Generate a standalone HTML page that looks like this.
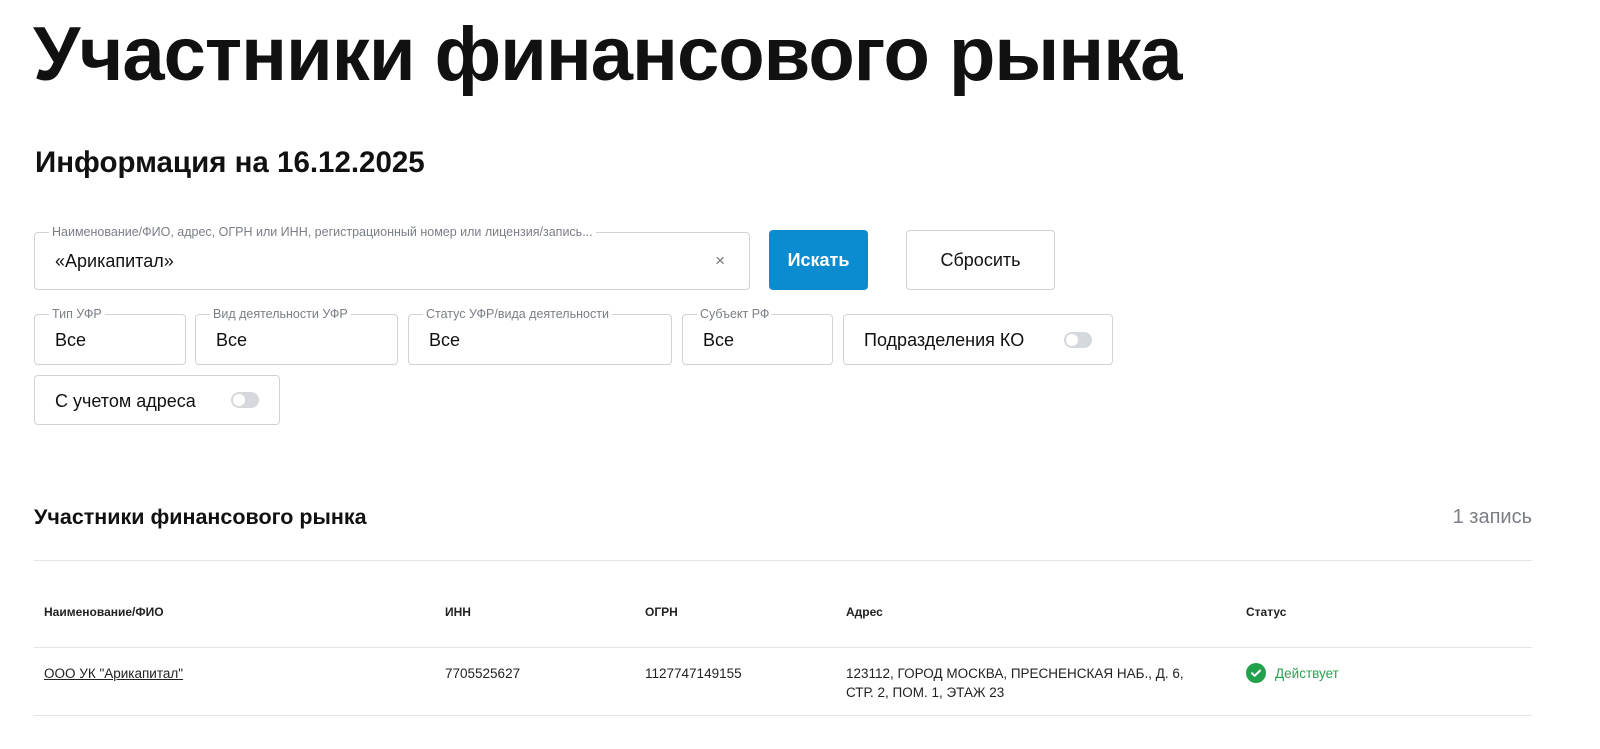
<!DOCTYPE html>
<html><head><meta charset="utf-8"><style>
*{box-sizing:border-box;margin:0;padding:0}
body{width:1600px;height:749px;background:#fff;font-family:"Liberation Sans",sans-serif;color:#111;position:relative;overflow:hidden}
.a{position:absolute}
h1{position:absolute;left:33px;top:11px;font-size:76px;font-weight:bold;letter-spacing:-1px;white-space:nowrap;color:#111}
h2{position:absolute;left:35px;top:146px;font-size:29.5px;font-weight:bold;white-space:nowrap}
.box{position:absolute;border:1px solid #cfd3d8;border-radius:4px;background:#fff}
.lbl{position:absolute;top:-8px;left:14px;background:#fff;padding:0 3px;font-size:12.5px;color:#7a7f86;white-space:nowrap}
.val{position:absolute;left:20px;font-size:18px;color:#111;white-space:nowrap}
.tg{position:absolute;width:28px;height:16px;border-radius:8px;background:#d5d8dc}
.tg:after{content:"";position:absolute;left:2px;top:2px;width:12px;height:12px;border-radius:50%;background:#fff}
.th{position:absolute;top:605px;font-size:12px;font-weight:bold;color:#222}
.td{position:absolute;top:664px;font-size:13.5px;color:#222;line-height:19px}
.ln{position:absolute;left:34px;width:1498px;height:1px;background:#e3e5e8}
</style></head><body>
<h1>Участники финансового рынка</h1>
<h2>Информация на 16.12.2025</h2>

<div class="box" style="left:34px;top:232px;width:716px;height:58px"><span class="lbl">Наименование/ФИО, адрес, ОГРН или ИНН, регистрационный номер или лицензия/запись...</span><span class="val" style="top:18px">«Арикапитал»</span><span class="a" style="right:24px;top:18px;font-size:17px;color:#777">×</span></div>
<div class="a" style="left:769px;top:230px;width:99px;height:60px;background:#0b8bd0;border-radius:4px;color:#fff;font-weight:bold;font-size:18px;text-align:center;line-height:60px">Искать</div>
<div class="box" style="left:906px;top:230px;width:149px;height:60px;text-align:center;line-height:58px;font-size:18px">Сбросить</div>

<div class="box" style="left:34px;top:314px;width:152px;height:51px"><span class="lbl">Тип УФР</span><span class="val" style="top:15px">Все</span></div>
<div class="box" style="left:195px;top:314px;width:203px;height:51px"><span class="lbl">Вид деятельности УФР</span><span class="val" style="top:15px">Все</span></div>
<div class="box" style="left:408px;top:314px;width:264px;height:51px"><span class="lbl">Статус УФР/вида деятельности</span><span class="val" style="top:15px">Все</span></div>
<div class="box" style="left:682px;top:314px;width:151px;height:51px"><span class="lbl">Субъект РФ</span><span class="val" style="top:15px">Все</span></div>
<div class="box" style="left:843px;top:314px;width:270px;height:51px"><span class="val" style="top:15px">Подразделения КО</span><span class="tg" style="left:220px;top:17px"></span></div>
<div class="box" style="left:34px;top:375px;width:246px;height:50px"><span class="val" style="top:15px">С учетом адреса</span><span class="tg" style="left:196px;top:16px"></span></div>

<div class="a" style="left:34px;top:505px;font-size:21.5px;font-weight:bold">Участники финансового рынка</div>
<div class="a" style="right:68px;top:506px;font-size:20px;color:#7a7f86">1 запись</div>
<div class="ln" style="top:560px"></div>
<div class="th" style="left:44px">Наименование/ФИО</div>
<div class="th" style="left:445px">ИНН</div>
<div class="th" style="left:645px">ОГРН</div>
<div class="th" style="left:846px">Адрес</div>
<div class="th" style="left:1246px">Статус</div>
<div class="ln" style="top:647px"></div>
<div class="td" style="left:44px;text-decoration:underline">ООО УК "Арикапитал"</div>
<div class="td" style="left:445px">7705525627</div>
<div class="td" style="left:645px">1127747149155</div>
<div class="td" style="left:846px">123112, ГОРОД МОСКВА, ПРЕСНЕНСКАЯ НАБ., Д. 6,<br>СТР. 2, ПОМ. 1, ЭТАЖ 23</div>
<svg class="a" style="left:1246px;top:663px" width="20" height="20" viewBox="0 0 20 20"><circle cx="10" cy="10" r="10" fill="#22a04b"/><path d="M6 10.2l2.7 2.6L14 7.6" stroke="#fff" stroke-width="2" fill="none" stroke-linecap="round" stroke-linejoin="round"/></svg>
<div class="td" style="left:1275px;color:#2aa050">Действует</div>
<div class="ln" style="top:715px"></div>
</body></html>
